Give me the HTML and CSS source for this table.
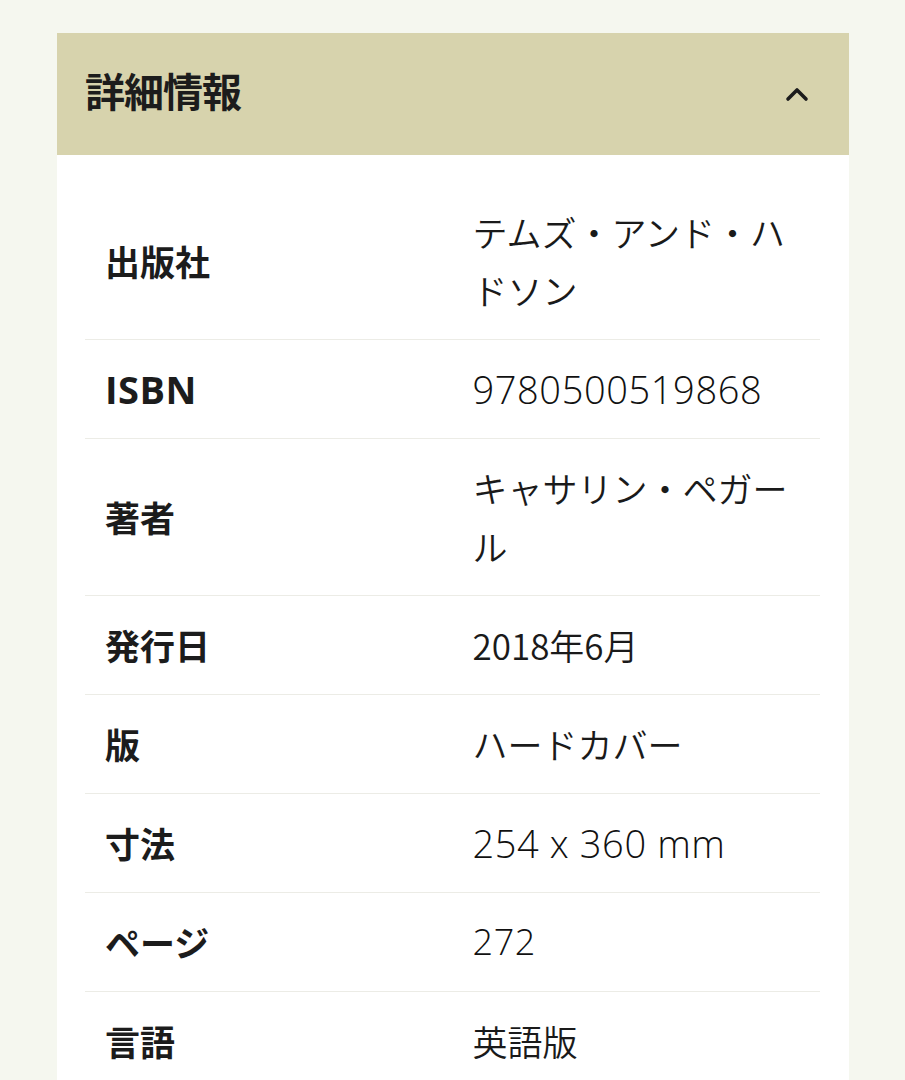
FILE: index.html
```html
<!DOCTYPE html>
<html lang="ja">
<head>
<meta charset="utf-8">
<title>詳細情報</title>
<link rel="stylesheet" href="styles.css">
</head>
<body>
<section class="card">
  <header class="card-head">
    <h2 class="card-title">詳細情報</h2>
    <svg class="chevron" width="24" height="16" viewBox="0 0 24 16" aria-hidden="true">
      <path d="M3 13 L12 4 L21 13" fill="none" stroke="#1c1c1c" stroke-width="3.6" stroke-linecap="round" stroke-linejoin="round"/>
    </svg>
  </header>
  <div class="card-body">
    <table class="details">
      <tr><th>出版社</th><td>テムズ・アンド・ハドソン</td></tr>
      <tr><th class="latin-label">ISBN</th><td class="num">9780500519868</td></tr>
      <tr><th>著者</th><td>キャサリン・ペガール</td></tr>
      <tr><th>発行日</th><td>2018年6月</td></tr>
      <tr><th>版</th><td>ハードカバー</td></tr>
      <tr><th>寸法</th><td class="num">254 x 360 mm</td></tr>
      <tr><th>ページ</th><td class="num short">272</td></tr>
      <tr><th>言語</th><td>英語版</td></tr>
    </table>
  </div>
</section>
</body>
</html>
```

FILE: styles.css
```css
html, body {
  margin: 0;
  padding: 0;
  background: #f5f7ef;
}

body {
  font-family: "Open Sans", "Noto Sans CJK JP", sans-serif;
  color: #1e1e1e;
  padding-top: 33px;
}

.card {
  width: 792px;
  margin-left: 57px;
  background: #ffffff;
  min-height: 1047px;
}

.card-head {
  background: #d7d3ad;
  height: 122px;
  display: flex;
  align-items: center;
  justify-content: space-between;
  padding: 0 40px 0 28px;
  box-sizing: border-box;
}

.card-title {
  margin: 0;
  font-family: "Noto Sans CJK JP", sans-serif;
  font-weight: 700;
  font-size: 40px;
  line-height: 1;
  color: #1c1c1c;
  letter-spacing: -1px;
  position: relative;
  top: -4px;
}

.chevron {
  display: block;
  position: relative;
  top: 0;
}

.card-body {
  padding: 28px 29px 0 28px;
}

.details {
  width: 100%;
  border-collapse: collapse;
  table-layout: fixed;
}

.details tr {
  border-bottom: 1px solid #ecece6;
}

.details th,
.details td {
  width: 50%;
  padding: 20px 20px;
  line-height: 58px;
  vertical-align: middle;
  text-align: left;
}

.details th {
  font-family: "Noto Sans CJK JP", sans-serif;
  font-weight: 700;
  font-size: 35px;
  color: #1c1c1c;
}

.details th.latin-label {
  font-family: "Open Sans", "Noto Sans CJK JP", sans-serif;
  font-size: 38px;
  letter-spacing: 0.5px;
}

.details td {
  font-family: "Noto Sans CJK JP", sans-serif;
  font-weight: 350;
  font-size: 35px;
  color: #1a1a1a;
}

.details td.num {
  font-family: "Open Sans", "Noto Sans CJK JP", sans-serif;
  font-weight: 300;
  font-size: 38px;
  letter-spacing: 0.6px;
  color: #111111;
}

.details td.num.short {
  font-size: 36px;
}
```
